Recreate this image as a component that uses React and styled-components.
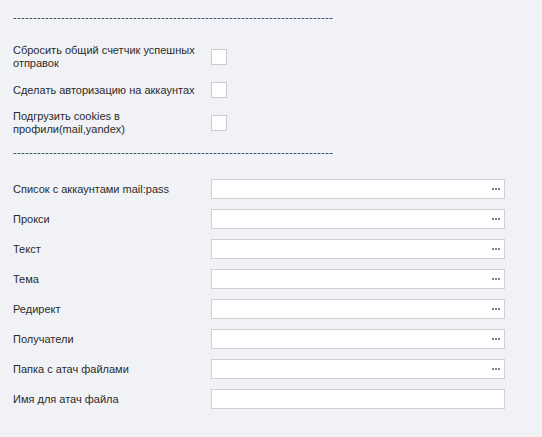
import React from "react";
import styled, { createGlobalStyle } from "styled-components";

const Global = createGlobalStyle`
  html, body {
    margin: 0;
    padding: 0;
    background: #f1f2f6;
  }
  body {
    font-family: "Liberation Sans", Arial, sans-serif;
    font-size: 11px;
    color: #2b2b2b;
  }
`;

const Page = styled.div`
  width: 542px;
  height: 437px;
  padding: 8px 0 0 13px;
  box-sizing: border-box;
  overflow: hidden;
`;

const Divider = styled.div`
  height: 18px;
  line-height: 18px;
  white-space: nowrap;
  letter-spacing: 0.34px;
  color: #3a3a3a;
`;

const CheckGroup = styled.div`
  display: flex;
  flex-direction: column;
  margin-top: 14.5px;
  margin-bottom: 3.5px;
`;

const CheckRow = styled.label`
  display: flex;
  align-items: center;
  width: 214px;
  height: 33px;
`;

const CheckText = styled.span`
  flex: 1;
  line-height: 13px;
  padding-right: 4px;
`;

const Box = styled.span`
  width: 16px;
  height: 16px;
  box-sizing: border-box;
  border: 1px solid #c9cad2;
  background: #fff;
  flex: none;
`;

const Fields = styled.div`
  display: flex;
  flex-direction: column;
  gap: 10px;
  margin-top: 18px;
`;

const FieldRow = styled.div`
  display: flex;
  align-items: center;
  height: 20px;
`;

const FieldLabel = styled.span`
  width: 198px;
  flex: none;
  white-space: nowrap;
`;

const Input = styled.div`
  width: 294px;
  height: 20px;
  box-sizing: border-box;
  border: 1px solid #cfd0d8;
  background: #fff;
  display: flex;
  align-items: center;
  justify-content: flex-end;
  padding-right: 4px;
`;

const Dots = styled.span`
  display: flex;
  gap: 1px;
  span {
    width: 2px;
    height: 2px;
    background: #858585;
  }
`;

const checks = [
  "Сбросить общий счетчик успешных отправок",
  "Сделать авторизацию на аккаунтах",
  "Подгрузить cookies в профили(mail,yandex)",
];

const fields = [
  { label: "Список с аккаунтами mail:pass", browse: true },
  { label: "Прокси", browse: true },
  { label: "Текст", browse: true },
  { label: "Тема", browse: true },
  { label: "Редирект", browse: true },
  { label: "Получатели", browse: true },
  { label: "Папка с атач файлами", browse: true },
  { label: "Имя для атач файла", browse: false },
];

const dashes = "-".repeat(80);

export default function App() {
  return (
    <Page>
      <Global />
      <Divider>{dashes}</Divider>
      <CheckGroup>
        {checks.map((c) => (
          <CheckRow key={c}>
            <CheckText>{c}</CheckText>
            <Box />
          </CheckRow>
        ))}
      </CheckGroup>
      <Divider>{dashes}</Divider>
      <Fields>
        {fields.map((f) => (
          <FieldRow key={f.label}>
            <FieldLabel>{f.label}</FieldLabel>
            <Input>
              {f.browse && (
                <Dots>
                  <span />
                  <span />
                  <span />
                </Dots>
              )}
            </Input>
          </FieldRow>
        ))}
      </Fields>
    </Page>
  );
}
